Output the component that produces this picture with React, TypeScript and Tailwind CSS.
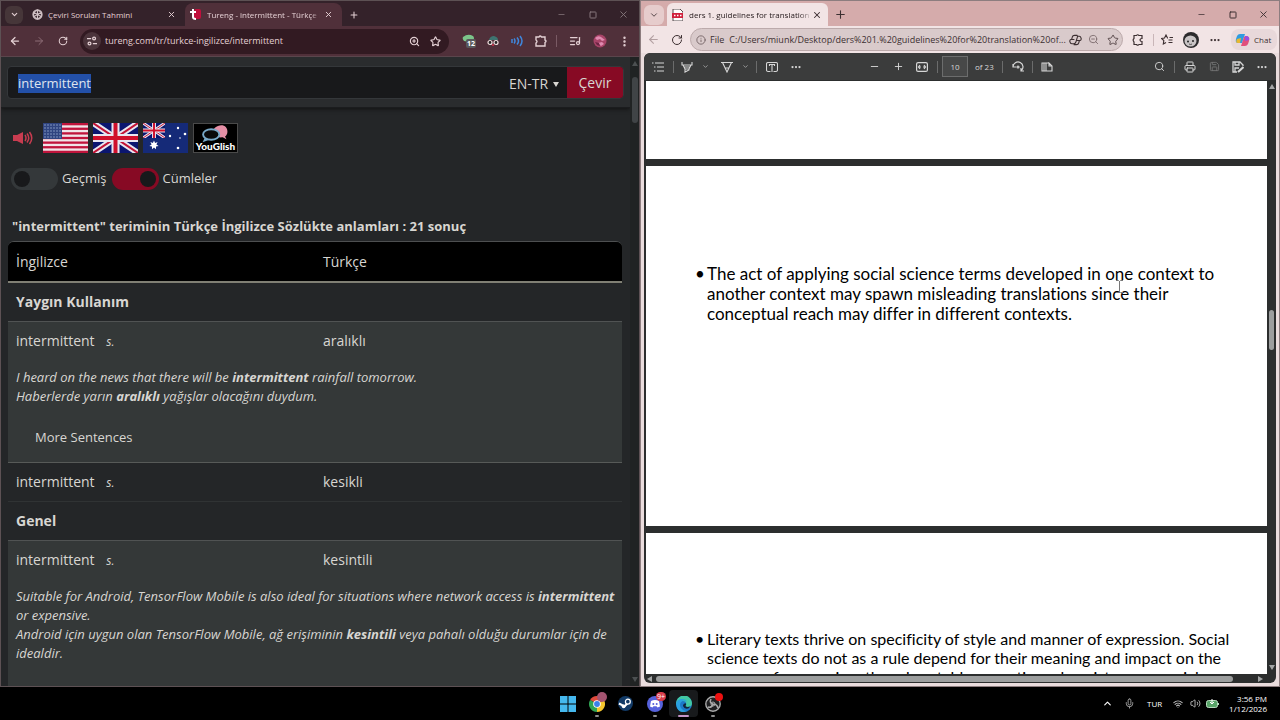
import type { ReactNode } from "react"
import {
  ArrowLeft,
  ArrowRight,
  ChevronDown,
  ChevronUp,
  Ellipsis,
  EllipsisVertical,
  Info,
  ListMusic,
  Mic,
  Minus,
  Plus,
  Printer,
  RotateCw,
  Save,
  Search,
  Square,
  Star,
  Volume2,
  Wifi,
  X,
  ZoomIn,
  ZoomOut,
} from "lucide-react"

function IconButton({ label, className = "w-6", children }: { label: string; className?: string; children: ReactNode }) {
  return (
    <button aria-label={label} className={`flex h-6 shrink-0 items-center justify-center ${className}`}>
      {children}
    </button>
  )
}

function Separator({ className = "bg-[#6b6c6c]" }: { className?: string }) {
  return <div className={`mx-[3px] h-3 w-px shrink-0 ${className}`} />
}

function WindowControls({ className }: { className: string }) {
  return (
    <div className={`ml-auto flex ${className}`}>
      <IconButton label="Minimize" className="w-[31px]"><Minus size={9} strokeWidth={2} /></IconButton>
      <IconButton label="Maximize" className="w-[31px]"><Square size={8} strokeWidth={3} /></IconButton>
      <IconButton label="Close" className="w-[31px]"><X size={11} strokeWidth={2} /></IconButton>
    </div>
  )
}

function Arrow({ dir, className }: { dir: "up" | "down" | "left" | "right"; className: string }) {
  const d = { up: "M0 6 3 1l3 5z", down: "M0 0h6L3 5z", left: "M5 0v6L0 3z", right: "M1 0v6l5-3z" }[dir]
  return (
    <svg viewBox="0 0 6 6" className={`size-[6px] shrink-0 ${className}`}>
      <path d={d} fill="currentColor" />
    </svg>
  )
}

/* Flags */

function UnionJack() {
  return (
    <>
      <rect width="45" height="30" fill="#0b1670" />
      <path d="M0 0l45 30M45 0L0 30" stroke="#e8e6f0" strokeWidth="6" />
      <path d="M0 0l45 30M45 0L0 30" stroke="#c21336" strokeWidth="2" />
      <path d="M22.5 0v30M0 15h45" stroke="#e8e6f0" strokeWidth="8" />
      <path d="M22.5 0v30M0 15h45" stroke="#d0102c" strokeWidth="4" />
    </>
  )
}

function UsFlag() {
  return (
    <svg viewBox="0 0 45 30" className="h-[30px] w-[45px]" preserveAspectRatio="none">
      <rect width="45" height="30" fill="#f0e4e8" />
      {[0, 1, 2, 3, 4, 5, 6].map((i) => (
        <rect key={i} y={i * 4.62} width="45" height="2.31" fill="#c0143c" />
      ))}
      <rect width="19" height="16" fill="#2f4480" />
      {[0, 1, 2, 3, 4].map((r) =>
        [0, 1, 2, 3, 4, 5].map((c) => <circle key={`${r}${c}`} cx={2 + c * 3} cy={2 + r * 3} r="0.7" fill="#9fb4d6" />),
      )}
    </svg>
  )
}

function UkFlag() {
  return (
    <svg viewBox="0 0 45 30" className="h-[30px] w-[45px]">
      <UnionJack />
    </svg>
  )
}

function AuFlag() {
  return (
    <svg viewBox="0 0 45 30" className="h-[30px] w-[45px]">
      <rect width="45" height="30" fill="#152a78" />
      <svg viewBox="0 0 45 30" width="22" height="15" preserveAspectRatio="none">
        <UnionJack />
      </svg>
      <path
        d="M11 17.5l1.1 2.4 2.5-.8-1.2 2.4 2.2 1.5-2.6.5v2.7L11 24.5l-2 1.7v-2.7l-2.6-.5 2.2-1.5-1.2-2.4 2.5.8z"
        fill="#fff"
      />
      <g fill="#fff">
        <circle cx="35" cy="5" r="1.2" />
        <circle cx="27" cy="13" r="1.2" />
        <circle cx="42" cy="11" r="1.3" />
        <circle cx="35" cy="25" r="1.3" />
        <circle cx="37" cy="15" r="0.8" />
      </g>
    </svg>
  )
}

function YouGlish() {
  return (
    <span className="relative flex h-[30px] w-[45px] items-end justify-center border border-[#4a4a4a] bg-black">
      <svg viewBox="0 0 45 30" className="absolute inset-0" fill="none">
        <path d="M25 2c6-2 10 1 10 6 0 2-1 4-2.500 5l1.500 3-4-2c-5 .5-9-1-10-5 0-4 2-6 5-7z" fill="#e58fa6" />
        <ellipse cx="18" cy="11" rx="8.500" ry="5.500" stroke="#78a9c8" strokeWidth="2" fill="#0a0a0a" />
        <path d="M11 15l-2 4 7-2.500" fill="#78a9c8" />
      </svg>
      <span className="relative font-[Lato,sans-serif] text-[10px] leading-[12px] font-black text-white">YouGlish</span>
    </span>
  )
}

/* Left window: dictionary */

function ChromeFrame() {
  return (
    <header className="bg-[#34222a] text-[#e4d0d4]">
      <div className="flex h-[25px] items-center pt-[2px]">
        <button aria-label="Search tabs" className="ml-1 flex size-[18px] items-center justify-center rounded-md bg-[#463639]">
          <ChevronDown size={9} strokeWidth={3} />
        </button>
        <div className="ml-[9px] flex h-full w-[153px] items-center">
          <svg viewBox="0 0 24 24" className="size-[11px]" fill="none" stroke="#cfc0c4" strokeWidth="2.5">
            <path d="M12 2l8.500 5v10L12 22l-8.500-5V7zM12 2v10l8.500 5M3.500 7L12 12M12 22V12M3.500 17l8.500-5 8.500-5" />
            <circle cx="12" cy="12" r="10" />
          </svg>
          <span className="ml-[5px] text-[8px]">Çeviri Soruları Tahmini</span>
          <button aria-label="Close tab" className="mr-[9px] ml-auto"><X size={9} strokeWidth={2.5} /></button>
        </div>
        <div className="flex h-full w-[157px] items-center rounded-t-lg bg-[#50303a]">
          <svg viewBox="0 0 11 11" className="ml-[5px] size-[11px]">
            <rect x="4" y="0" width="7" height="10" rx="2" fill="#c0103c" />
            <path d="M3 0v8q0 2 3 2M0 3h6" stroke="#fff" strokeWidth="2" fill="none" />
          </svg>
          <span className="ml-[6px] w-[113px] overflow-hidden text-[8px] whitespace-nowrap [mask-image:linear-gradient(to_right,black_92%,transparent)]">
            Tureng - intermittent - Türkçe İngilizce
          </span>
          <button aria-label="Close tab" className="ml-[4px]"><X size={9} strokeWidth={2.5} /></button>
        </div>
        <IconButton label="New tab"><Plus size={10} strokeWidth={2.5} /></IconButton>
        <WindowControls className="text-[#86777c]" />
      </div>
      <div className="flex h-[31px] items-center border-b border-[#5a454c] bg-[#50303a] px-[2px]">
        <IconButton label="Back"><ArrowLeft size={12} strokeWidth={2.5} /></IconButton>
        <IconButton label="Forward"><ArrowRight size={12} className="text-[#8d6d76]" /></IconButton>
        <IconButton label="Reload"><RotateCw size={10} strokeWidth={2.5} /></IconButton>
        <div className="ml-[5px] flex h-[25px] flex-1 items-center rounded-full bg-[#321a22] px-[3px]">
          <span className="flex size-[18px] items-center justify-center rounded-full bg-[#4b343b]">
            <svg viewBox="0 0 12 12" className="size-[10px]" fill="none" stroke="currentColor" strokeWidth="1.5">
              <path d="M0 3h5M7 9h5" />
              <circle cx="8.5" cy="3" r="1.7" />
              <circle cx="3" cy="9" r="1.7" />
            </svg>
          </span>
          <input
            aria-label="Address"
            readOnly
            value="tureng.com/tr/turkce-ingilizce/intermittent"
            className="ml-[4px] min-w-0 flex-1 bg-transparent text-[9px]"
          />
          <IconButton label="Zoom" className="w-[21px]"><ZoomIn size={11} strokeWidth={2.5} /></IconButton>
          <IconButton label="Bookmark" className="w-[21px]"><Star size={11} strokeWidth={2.5} /></IconButton>
        </div>
        <div className="ml-[8px] flex items-center">
          <IconButton label="Extension">
            <span className="relative size-[14px]">
              <svg viewBox="0 0 14 14" className="size-[14px]">
                <path d="M1 3q5-4 10-1 2 2 0 5l-4 1-2 1q0-2-3-2-2-2-1-4z" fill="#7cc48a" />
              </svg>
              <span className="absolute top-[5px] left-[4px] rounded-xs bg-[#59595c] px-px text-[7px] leading-[9px] font-bold text-white">12</span>
            </span>
          </IconButton>
          <IconButton label="Incognito helper">
            <svg viewBox="0 0 12 12" className="size-[12px]">
              <path d="M2 5q1-4 5-4 4 1 4 4z" fill="#3e7470" />
              <circle cx="3" cy="7.5" r="2" fill="#222" stroke="#f0dede" strokeWidth="1.2" />
              <circle cx="9" cy="7.5" r="2" fill="#222" stroke="#f0dede" strokeWidth="1.2" />
              <circle cx="6" cy="10" r="1" fill="#d0304a" />
            </svg>
          </IconButton>
          <IconButton label="Read aloud">
            <svg viewBox="0 0 12 12" className="size-[12px]" fill="none" stroke="#3f86dc" strokeWidth="1.5">
              <path d="M1 4v4M3 3.500q2 2.500 0 5M6 2.500q3 3.500 0 7M9 1q4 5 0 10" />
            </svg>
          </IconButton>
          <IconButton label="Extensions">
            <svg viewBox="0 0 12 12" className="size-[12px]" fill="none" stroke="currentColor" strokeWidth="1.4">
              <path d="M1 2h3q1-2 2.500 0H10v3q2 1 0 2.500V11H1V8q2-1.500 0-3z" />
            </svg>
          </IconButton>
          <Separator className="bg-[#7a5a64]" />
          <IconButton label="Media" className="w-[29px]"><ListMusic size={12} strokeWidth={2.5} /></IconButton>
          <IconButton label="Profile" className="w-[22px]">
            <svg viewBox="0 0 14 14" className="size-[14px]">
              <circle cx="7" cy="7" r="6.5" fill="#a84468" />
              <path d="M2 4q3-3 6-1l4 3-3 1-2-2-3 1zM5 9l4-1 2 2-3 2z" fill="#e08ab0" />
              <path d="M2 8l4 1 1 3-3-1z" fill="#6d2444" />
            </svg>
          </IconButton>
          <IconButton label="Menu" className="w-[26px]"><EllipsisVertical size={13} strokeWidth={2.5} /></IconButton>
        </div>
      </div>
    </header>
  )
}

function Switch({ label, on }: { label: string; on?: boolean }) {
  return (
    <label className="flex items-center gap-1 text-[13px]">
      <input
        type="checkbox"
        role="switch"
        defaultChecked={on}
        className="flex h-[22px] w-[47px] appearance-none items-center rounded-full bg-[#34383a] px-[3px] before:size-4 before:rounded-full before:bg-[#18191b] checked:justify-end checked:bg-[#870a24]"
      />
      {label}
    </label>
  )
}

function GroupRow({ title }: { title: string }) {
  return (
    <tr className="h-[39px] border-b border-[#505353]">
      <th colSpan={2} className="px-2 text-left font-bold">{title}</th>
    </tr>
  )
}

function TermCells({ tr }: { tr: string }) {
  return (
    <>
      <td className="px-2">
        <a href="#term">intermittent</a> <i className="ml-2 text-[12px]">s.</i>
      </td>
      <td className="px-2"><a href="#term">{tr}</a></td>
    </>
  )
}

function Dictionary() {
  return (
    <div className="flex min-h-0 flex-1 bg-[#242628] text-[14px] text-[#d8d6d2]">
      <main className="flex min-w-0 flex-1 flex-col overflow-hidden">
        <div className="shrink-0 border-b border-[#1b1c1e] bg-[#2a2c2e] px-[6px] pt-[9px] pb-[8px] shadow-[0_1px_4px_#111]">
          <form className="flex h-[33px] overflow-hidden rounded-sm border border-[#34373a] bg-[#18191b]">
            <div className="flex flex-1 items-center pt-[2px] pl-[10px]">
              <input
                aria-label="Search term"
                defaultValue="intermittent"
                className="h-[19px] bg-[#2350a8] text-[13px] text-[#dfe4ee] [field-sizing:content]"
              />
            </div>
            <div className="mr-[8px] flex items-center gap-1 pt-[2px]">
              <select aria-label="Language" className="appearance-none bg-transparent text-[14px]">
                <option>EN-TR</option>
              </select>
              <Arrow dir="down" className="mt-[3px]" />
            </div>
            <button type="button" className="w-[56px] bg-[#870a24]">Çevir</button>
          </form>
        </div>

        <div className="flex h-[60px] shrink-0 items-center gap-[5px] pl-[12px]">
          <button aria-label="Listen" className="mr-[5px] text-[#c83c50]">
            <svg viewBox="0 0 20 14" className="h-[14px] w-[20px]">
              <path d="M0 4h4l6-3v12l-6-3H0z" fill="currentColor" />
              <path d="M12 4q2 3 0 6M14 2.500q3.500 4.500 0 9M16.500 1q4.500 6 0 12" fill="none" stroke="currentColor" strokeWidth="1.5" />
            </svg>
          </button>
          <UsFlag />
          <UkFlag />
          <AuFlag />
          <YouGlish />
        </div>

        <div className="flex h-[22px] shrink-0 items-center gap-[5px] pl-[10px]">
          <Switch label="Geçmiş" />
          <Switch label="Cümleler" on />
        </div>

        <h1 className="mt-[26px] ml-[11px] shrink-0 text-[13px] leading-[20px] font-bold">
          "intermittent" teriminin Türkçe İngilizce Sözlükte anlamları : 21 sonuç
        </h1>

        <div className="mt-[5px] mr-[8px] ml-[7px] shrink-0 overflow-hidden rounded-t-md border-t border-[#4d4f50]">
          <table className="w-full table-fixed border-collapse">
            <thead>
              <tr className="h-[40px] border-b-2 border-[#807f74] bg-black text-left">
                <th className="px-2 font-normal">İngilizce</th>
                <th className="px-2 font-normal">Türkçe</th>
              </tr>
            </thead>
            <tbody>
              <GroupRow title="Yaygın Kullanım" />
              <tr className="h-[39px] bg-[#343838]">
                <TermCells tr="aralıklı" />
              </tr>
              <tr className="h-[102px] border-b border-[#575a58] bg-[#343838]">
                <td colSpan={2} className="pt-2 pr-1 pl-2 align-top">
                  <p className="text-[13px] leading-[19px] italic">
                    I heard on the news that there will be <b>intermittent</b> rainfall tomorrow.
                    <br />
                    Haberlerde yarın <b>aralıklı</b> yağışlar olacağını duydum.
                  </p>
                  <button className="mt-[22px] ml-[19px] text-[13px] leading-[19px]">More Sentences</button>
                </td>
              </tr>
              <tr className="h-[39px] border-b border-[#303334]">
                <TermCells tr="kesikli" />
              </tr>
              <GroupRow title="Genel" />
              <tr className="h-[39px] bg-[#343838]">
                <TermCells tr="kesintili" />
              </tr>
              <tr className="h-[140px] bg-[#343838]">
                <td colSpan={2} className="pt-2 pr-1 pl-2 align-top">
                  <p className="text-[13px] leading-[19px] italic">
                    Suitable for Android, TensorFlow Mobile is also ideal for situations where network access is{" "}
                    <b>intermittent</b> or expensive.
                    <br />
                    Android için uygun olan TensorFlow Mobile, ağ erişiminin <b>kesintili</b> veya pahalı olduğu durumlar
                    için de idealdir.
                  </p>
                </td>
              </tr>
            </tbody>
          </table>
        </div>
      </main>
      <div className="flex w-[9px] shrink-0 flex-col items-center bg-[#202323] py-[3px] text-[#4c5051]">
        <Arrow dir="up" className="" />
        <div className="mt-[11px] mb-auto h-[46px] w-[6px] rounded-full bg-[#404446]" />
        <Arrow dir="down" className="" />
      </div>
    </div>
  )
}

/* Right window: PDF reader */

function EdgeFrame() {
  return (
    <header className="bg-[#d5abab] text-[#3c2f31]">
      <div className="flex h-[25px] items-center pt-[2px]">
        <button aria-label="Tab actions" className="ml-[3px] flex size-[20px] items-center justify-center rounded-md bg-[#e6cccc]">
          <ChevronDown size={10} strokeWidth={2} />
        </button>
        <div className="ml-[3px] flex h-full w-[161px] items-center rounded-t-md bg-[#f2e4e5]">
          <svg viewBox="0 0 11 12" className="ml-[5px] h-[12px] w-[11px]">
            <path d="M1 0h7l3 3v9H1z" fill="#fff" stroke="#55484a" />
            <rect y="4" width="11" height="5" fill="#d0203c" />
            <path d="M2 6.500h1.500M5 6.500h1.500M8 6.500h1.500" stroke="#fff" strokeWidth="1.5" />
          </svg>
          <span className="ml-[6px] w-[123px] overflow-hidden text-[8px] whitespace-nowrap text-[#2b2022] [mask-image:linear-gradient(to_right,black_90%,transparent)]">
            ders 1. guidelines for translation of texts
          </span>
          <button aria-label="Close tab"><X size={10} strokeWidth={2.5} /></button>
        </div>
        <IconButton label="New tab"><Plus size={13} strokeWidth={2} /></IconButton>
        <WindowControls className="" />
      </div>
      <div className="flex h-[27px] items-center bg-[#f2e4e5]">
        <IconButton label="Back"><ArrowLeft size={13} className="text-[#b3a0a2]" /></IconButton>
        <IconButton label="Refresh"><RotateCw size={12} strokeWidth={2} /></IconButton>
        <div className="ml-[1px] flex h-[23px] min-w-0 flex-1 items-center rounded-full border border-[#bcaaab] bg-[#d9cacb] pl-[5px]">
          <Info size={10} className="text-[#6c5c5e]" />
          <span className="ml-[4px] text-[9px]">File</span>
          <input
            aria-label="Address"
            readOnly
            value="C:/Users/miunk/Desktop/ders%201.%20guidelines%20for%20translation%20of..."
            className="ml-[5px] min-w-0 flex-1 bg-transparent text-[9px]"
          />
          <IconButton label="Copilot" className="w-[17px]">
            <svg viewBox="0 0 14 12" className="h-[12px] w-[13px]" fill="none" stroke="currentColor" strokeWidth="1.2">
              <path d="M9 1H6Q4 1 3.500 3L2.800 5.500H2Q.5 6 1 8q.5 2 2 2h2q2 0 2.500-2L9 3Q9.500 1 8 1M5 11h3q2 0 2.500-2l.7-2.500H12q1.500-.5 1-2.500-.5-2-2-2H9M2.800 5.500h3M8 6.500h3" />
            </svg>
          </IconButton>
          <IconButton label="Zoom out" className="w-[19px]"><ZoomOut size={11} className="text-[#7d6c6e]" /></IconButton>
          <IconButton label="Favorite" className="w-[19px]"><Star size={12} className="text-[#5c4c4e]" /></IconButton>
        </div>
        <IconButton label="Extensions" className="ml-[3px] w-6">
          <svg viewBox="0 0 12 12" className="size-[12px]" fill="none" stroke="currentColor" strokeWidth="1.2">
            <path d="M2 1.500h2.500q1-1.500 2.500 0h3V4.500q-2 0-2 1.500t2 1.500v3H7q-1 1.500-2.500 0H2V8Q.3 6 2 4.500z" />
          </svg>
        </IconButton>
        <Separator className="bg-[#c9b6b8]" />
        <IconButton label="Favorites" className="w-[20px]">
          <svg viewBox="0 0 12 12" className="size-[12px]" fill="none" stroke="currentColor" strokeWidth="1.1">
            <path d="M7 4h-.5L5 1 3.500 4 .5 4.500l2.300 2L2.300 10 5 8.500M7.500 6h4M7.500 8.500h4M8.500 3.500H12" />
          </svg>
        </IconButton>
        <IconButton label="Profile" className="w-[27px]">
          <svg viewBox="0 0 16 16" className="size-[16px]">
            <circle cx="8" cy="8" r="8" fill="#2c2a2c" />
            <ellipse cx="7.5" cy="9" rx="6" ry="5.5" fill="#c9c4c5" />
            <circle cx="5" cy="9.5" r="1" fill="#222" />
            <circle cx="10" cy="9" r="1" fill="#222" />
            <path d="M6 12q2 1 3 0" stroke="#555" fill="none" />
          </svg>
        </IconButton>
        <IconButton label="Settings and more" className="w-[22px]"><Ellipsis size={12} strokeWidth={2.5} /></IconButton>
        <button className="mr-[2px] ml-[5px] flex h-[21px] w-[46px] items-center gap-[4px] rounded-lg bg-[#e8d8da] px-[4px] text-[8px]">
          <svg viewBox="0 0 15 14" className="h-[14px] w-[15px]">
            <path d="M5 1h5L7 10H3Q0 10 1 6l1-3q1-2 3-2z" fill="#2f9be0" />
            <path d="M2 6l4-1-1 5H3Q0 10 2 6z" fill="#e8b830" />
            <path d="M10 3h2q3 1 2 5l-1 3q-1 2-3 2H6l3-9z" fill="#e0507c" />
            <path d="M10 3h2q3 1 2 4l-4 1z" fill="#9a4fe0" />
          </svg>
          Chat
        </button>
      </div>
    </header>
  )
}

function PdfToolbar() {
  return (
    <div className="flex h-[27px] shrink-0 items-center rounded-t-md bg-[#3b3c3c] text-[#d6d6d6]">
      <div className="flex flex-1 items-center pl-[2px]">
        <IconButton label="Contents">
          <svg viewBox="0 0 12 10" className="h-[10px] w-[12px]" stroke="currentColor" strokeWidth="1.2">
            <path d="M0 1h1.500M3 1h9M2 5h1.500M5 5h7M2 9h1.500M5 9h7" />
          </svg>
        </IconButton>
        <Separator />
        <IconButton label="Highlight" className="w-[20px]">
          <svg viewBox="0 0 12 12" className="size-[12px]" fill="none" stroke="currentColor" strokeWidth="1.1">
            <path d="M1 1v3h10V1M2 4l2 4h4l2-4M4 8v3l4-2V8M3 6h6" />
          </svg>
        </IconButton>
        <IconButton label="Highlight options" className="w-[16px]"><ChevronDown size={7} /></IconButton>
        <IconButton label="Draw" className="ml-[2px] w-[24px]">
          <svg viewBox="0 0 12 12" className="size-[12px]" fill="none" stroke="currentColor" strokeWidth="1.1">
            <path d="M0 1.500h12M1.500 1.500L6 11l4.500-9.500M4 7h4" />
          </svg>
        </IconButton>
        <IconButton label="Draw options" className="w-[12px]"><ChevronDown size={7} /></IconButton>
        <div className="ml-[2px] flex items-center">
          <Separator className="bg-[#6b6c6c]" />
          <IconButton label="Add text">
            <svg viewBox="0 0 12 12" className="size-[12px]" fill="none" stroke="currentColor" strokeWidth="1.1">
              <path d="M4.500 10.500H2q-1.500 0-1.500-1.500V3q0-1.500 1.500-1.500h8q1.500 0 1.500 1.500v6q0 1.500-1.500 1.500H7.500M3.500 5V3.500h5V5M6 3.500V11" />
            </svg>
          </IconButton>
          <IconButton label="More tools"><Ellipsis size={12} strokeWidth={2.5} /></IconButton>
        </div>
      </div>
      <div className="flex items-center">
        <IconButton label="Zoom out"><Minus size={11} /></IconButton>
        <IconButton label="Zoom in"><Plus size={11} /></IconButton>
        <IconButton label="Fit to width">
          <svg viewBox="0 0 12 10" className="h-[10px] w-[12px]" fill="none" stroke="currentColor" strokeWidth="1.2">
            <rect x="0.6" y="0.6" width="10.8" height="8.8" rx="1.5" />
            <path d="M2.500 5h2.500M7 5h2.500M4 3L2.500 5 4 7M8 3l1.500 2L8 7" />
          </svg>
        </IconButton>
        <Separator />
        <input
          aria-label="Page number"
          defaultValue="10"
          className="ml-px h-[21px] w-[26px] border border-[#6c6d6d] bg-[#474848] text-center text-[8px]"
        />
        <span className="w-[31px] pl-[7px] text-[8px] whitespace-nowrap">of 23</span>
        <Separator />
        <IconButton label="Rotate" className="w-[23px]">
          <svg viewBox="0 0 12 12" className="size-[12px]" fill="none" stroke="currentColor" strokeWidth="1.2">
            <path d="M1 6a5 5 0 1 1 8 4M9 7v3h3M1 3v3h3" />
            <circle cx="6" cy="6" r="1" />
          </svg>
        </IconButton>
        <Separator />
        <IconButton label="Page view" className="w-[22px]">
          <svg viewBox="0 0 12 10" className="h-[10px] w-[12px]" fill="none" stroke="currentColor" strokeWidth="1.1">
            <path d="M5 1H1v8h4zM3 1v8M5 1h3M5 9h6V4L8 1v3h3" />
          </svg>
        </IconButton>
      </div>
      <div className="flex flex-1 items-center justify-end pr-[2px]">
        <IconButton label="Find"><Search size={11} /></IconButton>
        <Separator />
        <IconButton label="Print"><Printer size={12} /></IconButton>
        <IconButton label="Save" className="w-6 text-[#747575]"><Save size={11} /></IconButton>
        <IconButton label="Save as">
          <svg viewBox="0 0 12 12" className="size-[12px]" fill="none" stroke="currentColor" strokeWidth="1.3">
            <path d="M5 11H1V1h7l3 3v1M3 1v3h4V1M3 11V7h4" />
            <path d="M6 11l5.500-5" strokeWidth="2.2" />
          </svg>
        </IconButton>
        <IconButton label="More"><Ellipsis size={12} strokeWidth={2.5} /></IconButton>
      </div>
    </div>
  )
}

function Slide({ className, text }: { className: string; text?: string }) {
  return (
    <section className={`w-full shrink-0 bg-white pr-[30px] pl-[49px] font-[Lato,sans-serif] text-black [font-variant-ligatures:none] ${className}`}>
      {text && (
        <ul>
          <li className="flex before:w-[12px] before:shrink-0 before:content-['•']">{text}</li>
        </ul>
      )}
    </section>
  )
}

function PdfReader() {
  return (
    <div className="mr-[3px] mb-[3px] ml-[3px] flex min-h-0 flex-1 flex-col overflow-hidden rounded-md bg-[#2c2e2e]">
      <PdfToolbar />
      <div className="flex min-h-0 flex-1 pl-[2px]">
        <div className="relative flex min-w-0 flex-1 flex-col gap-[7px] overflow-hidden pt-px">
          <Slide className="h-[78px]" />
          <Slide
            className="h-[360px] pt-[98px] text-[17px] leading-[20px]"
            text="The act of applying social science terms developed in one context to another context may spawn misleading translations since their conceptual reach may differ in different contexts."
          />
          <Slide
            className="h-[360px] pt-[96px] text-[16px] leading-[19px]"
            text="Literary texts thrive on specificity of style and manner of expression. Social science texts do not as a rule depend for their meaning and impact on the manner of expression, though notable exceptions do exist, some social"
          />
          <svg viewBox="0 0 7 13" className="absolute top-[200px] left-[470px] h-[13px] w-[7px]" fill="none" stroke="#777">
            <path d="M0 .5h2.500l1 1 1-1H7M3.500 1v11M0 12.500h2.500l1-1 1 1H7" />
          </svg>
        </div>
        <div className="flex w-[9px] shrink-0 flex-col items-center py-[3px] text-[#a3a5a5]">
          <Arrow dir="up" className="" />
          <div className="mt-[221px] mb-auto h-[40px] w-[5px] rounded-full bg-[#9c9e9e]" />
          <Arrow dir="down" className="" />
        </div>
      </div>
      <div className="flex h-[9px] shrink-0 items-center pr-[13px] pl-[3px] text-[#a3a5a5]">
        <Arrow dir="left" className="" />
        <div className="mr-[24px] ml-[3px] h-[6px] flex-1 rounded-full bg-[#9c9e9e]" />
        <Arrow dir="right" className="" />
      </div>
    </div>
  )
}

/* Taskbar */

function TaskIcon({ label, dot, active, children }: { label: string; dot?: boolean; active?: boolean; children: ReactNode }) {
  return (
    <button
      aria-label={label}
      className={`relative flex h-[27px] w-[29px] items-center justify-center rounded-sm ${active ? "bg-[#181a1c]" : ""}`}
    >
      {children}
      {dot && <span className="absolute bottom-0 h-[2px] w-1 rounded-full bg-[#8d8d8d]" />}
      {active && <span className="absolute bottom-0 h-[2px] w-[11px] rounded-full bg-[#c596c9]" />}
    </button>
  )
}

function Taskbar() {
  return (
    <footer className="grid h-[33px] shrink-0 grid-cols-[1fr_auto_1fr] items-center bg-black text-white">
      <div />
      <div className="flex">
        <TaskIcon label="Start">
          <svg viewBox="0 0 16 16" className="size-[16px]" fill="#45b8ee">
            <path d="M0 0h7.500v7.500H0zM8.500 0H16v7.500H8.500zM0 8.500h7.500V16H0zM8.500 8.500H16V16H8.500z" />
          </svg>
        </TaskIcon>
        <TaskIcon label="Chrome" dot>
          <svg viewBox="0 0 16 16" className="size-[16px]">
            <path d="M8 8L1.070 4A8 8 0 0 1 14.930 4z" fill="#e04a3c" />
            <path d="M8 8l6.930-4A8 8 0 0 1 8 16z" fill="#f5c52c" />
            <path d="M8 8v8A8 8 0 0 1 1.070 4z" fill="#2fa352" />
            <circle cx="8" cy="8" r="3.8" fill="#fff" />
            <circle cx="8" cy="8" r="2.9" fill="#3c80ea" />
          </svg>
          <span className="absolute top-[2px] right-[4px] size-[10px] rounded-full bg-[#a45470]" />
        </TaskIcon>
        <TaskIcon label="Steam">
          <svg viewBox="0 0 16 16" className="size-[15px]">
            <circle cx="8" cy="8" r="8" fill="#123a66" />
            <path d="M1 8l6 3 3-3" stroke="#fff" strokeWidth="2.2" fill="none" />
            <circle cx="10.5" cy="6" r="2.6" fill="#123a66" stroke="#fff" strokeWidth="1.3" />
            <circle cx="6" cy="11" r="2" fill="#fff" />
          </svg>
        </TaskIcon>
        <TaskIcon label="Discord" dot>
          <svg viewBox="0 0 16 16" className="size-[16px]">
            <circle cx="8" cy="8" r="8" fill="#5662dc" />
            <path d="M4 5q4-2 8 0l1 5.500-2.500 1-1-1.200h-3l-1 1.200-2.500-1z" fill="#fff" />
            <circle cx="6.3" cy="8" r="1" fill="#5662dc" />
            <circle cx="9.7" cy="8" r="1" fill="#5662dc" />
          </svg>
          <span className="absolute top-[2px] right-[3px] rounded-full bg-[#d83c4a] px-px text-[7px] leading-[9px]">9+</span>
        </TaskIcon>
        <TaskIcon label="Edge" active>
          <svg viewBox="0 0 16 16" className="size-[16px]">
            <circle cx="8" cy="8" r="8" fill="#1c78c8" />
            <path d="M0 8a8 8 0 0 1 16-1q0 4-4 4-3 0-2-2 1-4-3-4-5 0-7 4z" fill="#42c8a4" />
            <path d="M0 8q1-5 6-5 4 0 5 3-3-3-6 0-2 3 0 6 2 3 6 3-7 3-10-3z" fill="#2aa0e0" />
            <path d="M9.500 7q1.500 2-.2 3 1.500 1.500 5 .5Q12 14 8.500 12 5 9 9.500 7z" fill="#12233a" />
          </svg>
        </TaskIcon>
        <TaskIcon label="OBS" dot>
          <svg viewBox="0 0 16 16" className="size-[16px]" fill="none" stroke="#aaa">
            <circle cx="8" cy="8" r="7.2" fill="#202022" strokeWidth="1.4" />
            <path d="M8 8q-4-1-2-5M8 8q4 0 5 4M8 8q-1 4-5 3" strokeWidth="1.6" />
            <circle cx="8" cy="8" r="2" />
          </svg>
          <span className="absolute top-[3px] right-[4px] size-[8px] rounded-full bg-[#ec1010]" />
        </TaskIcon>
      </div>
      <div className="flex items-center justify-end pr-[13px] text-[8px]">
        <IconButton label="Hidden icons" className="w-[22px]"><ChevronUp size={11} strokeWidth={2.5} /></IconButton>
        <IconButton label="Microphone" className="w-[22px]"><Mic size={11} className="text-[#aaa]" /></IconButton>
        <button className="w-[29px] text-center">TUR</button>
        <IconButton label="Network" className="w-[18px]"><Wifi size={10} strokeWidth={2.5} className="text-[#bbb]" /></IconButton>
        <IconButton label="Volume" className="w-[16px]"><Volume2 size={11} strokeWidth={1.5} /></IconButton>
        <IconButton label="Battery" className="w-[18px]">
          <svg viewBox="0 0 13 9" className="h-[9px] w-[13px]">
            <rect x="0.5" y="1.5" width="11" height="7" rx="2" fill="#58a468" stroke="#b7dcbf" />
            <path d="M12.500 4v2" stroke="#b7dcbf" />
            <path d="M6 0v5M4 3l2 2 2-2" stroke="#fff" fill="none" />
          </svg>
        </IconButton>
        <div className="ml-[8px] text-right leading-[10px] whitespace-nowrap">
          3:56 PM
          <br />
          1/12/2026
        </div>
      </div>
    </footer>
  )
}

export default function App() {
  return (
    <div className="flex h-screen flex-col overflow-hidden bg-black font-['Open_Sans','Noto_Sans',sans-serif]">
      <div className="grid min-h-0 flex-1 grid-cols-2">
        <div className="flex min-h-0 min-w-0 flex-col border border-[#5d5154]">
          <ChromeFrame />
          <Dictionary />
        </div>
        <div className="flex min-h-0 min-w-0 flex-col border border-[#8d7d7f] bg-[#eadcdd]">
          <EdgeFrame />
          <PdfReader />
        </div>
      </div>
      <Taskbar />
    </div>
  )
}
